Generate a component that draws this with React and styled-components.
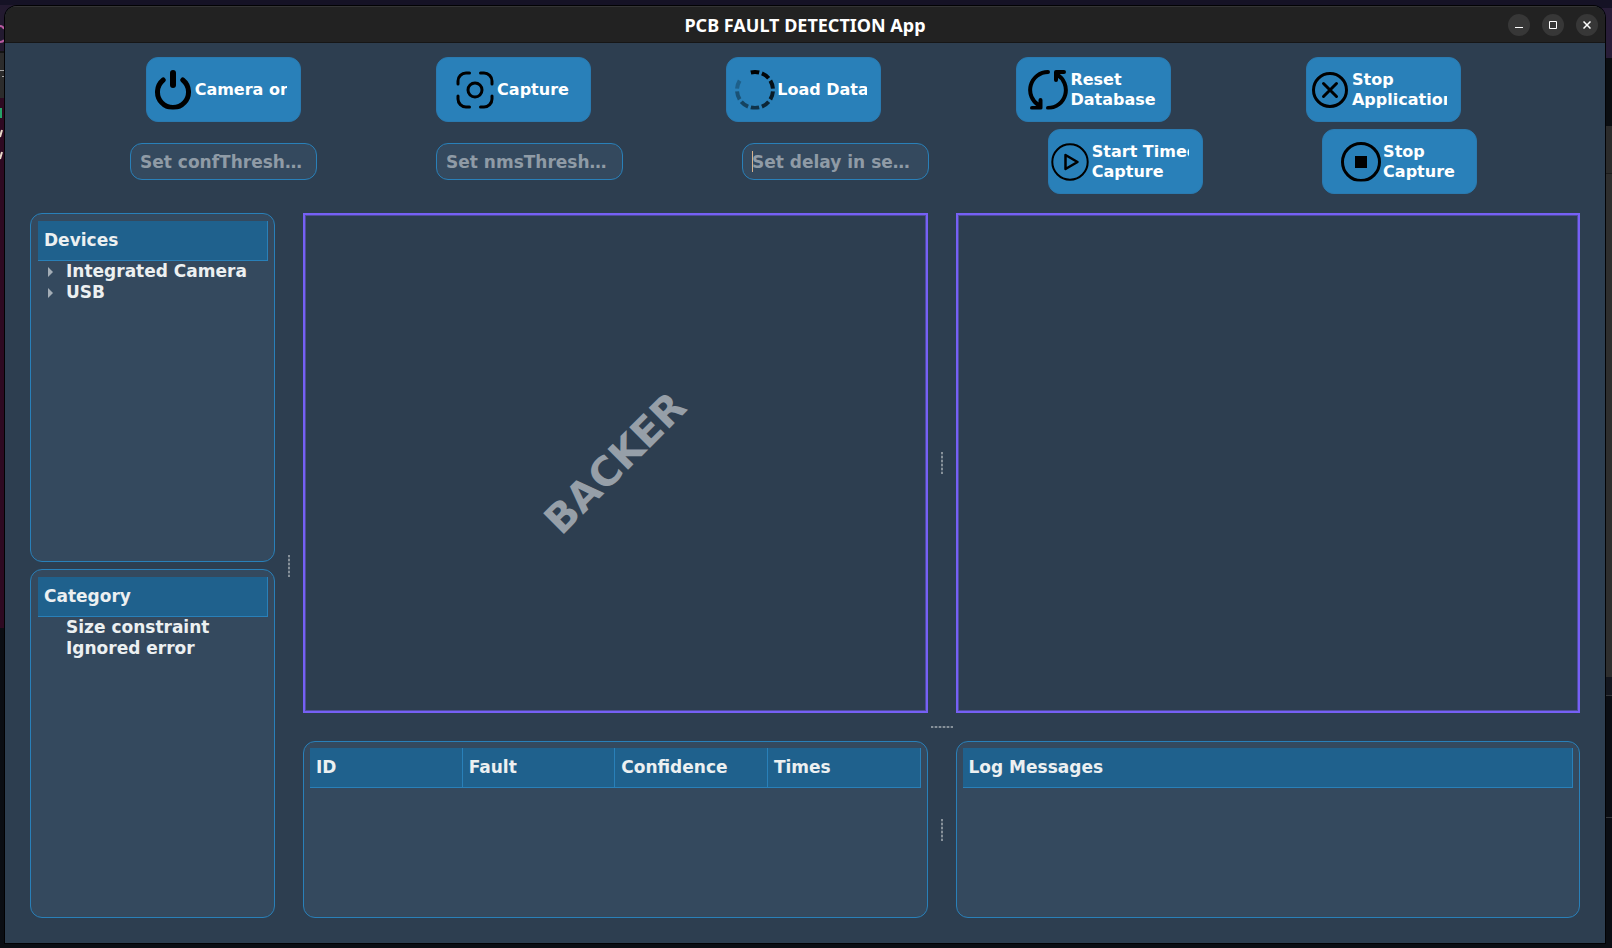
import React from 'react';
import styled, { createGlobalStyle } from 'styled-components';

const color = {
  base: '#2d3e50',
  panel: '#34495e',
  accent: '#2980b9',
  header: '#1f618d',
  text: '#ecf0f1',
  muted: '#8f9ba6',
  video: '#7660f5',
};

const GlobalStyle = createGlobalStyle`
  * { box-sizing: border-box; }
  body {
    margin: 0;
    background: #0b0e14;
    color: ${color.text};
    font-family: "DejaVu Sans", sans-serif;
    font-weight: bold;
    font-size: 17px;
    line-height: 21px;
  }
`;

const Desktop = styled.div`
  position: relative;
  display: flex;
  min-height: 100vh;
  padding: 6px 7px 5px 5px;
  background:
    linear-gradient(#151225 5px, transparent 5px),
    linear-gradient(#231a30 51px, #141414 51px 53px, #2c2c2c 53px 98px, #2e0a22 98px 628px, #0b0e14 628px) left / 50% 100% no-repeat,
    linear-gradient(#151225 8px, #281d38 8px 58px, #0b0e12 58px 126px, #2b2b2b 126px 173px, #1c1c1c 173px 174px, #2e2e2e 174px 677px, #14171f 677px 695px, #33363b 695px 696px, #0b0e14 696px 817px, #33363b 817px 818px, #0b0e14 818px) right / 50% 100% no-repeat;
`;

const EdgeMarks = styled.svg`
  position: absolute;
  top: 0;
  left: 0;
`;

const Window = styled.main`
  position: relative;
  flex: 1;
  display: flex;
  flex-direction: column;
  overflow: hidden;
  background: ${color.base};
  border-radius: 12px 12px 0 0;
  box-shadow: 0 0 0 1px #020204;
`;

const TitleBar = styled.header`
  display: grid;
  grid-template-columns: 1fr auto 1fr;
  align-items: center;
  height: 37px;
  padding: 0 7px;
  background: #222222;
  border-top: 1px solid #343434;
  border-bottom: 1px solid #161616;
`;

const Title = styled.h1`
  grid-column: 2;
  margin: 0;
  color: #ffffff;
  font: bold 18px/24px "Noto Sans", sans-serif;
`;

const WindowControls = styled.div`
  display: flex;
  justify-content: flex-end;
  gap: 12px;
`;

const WindowButton = styled.button`
  display: grid;
  place-items: center;
  width: 22px;
  height: 22px;
  padding: 0;
  border: 0;
  border-radius: 50%;
  background: #373737;
  color: #ffffff;
`;

const Toolbar = styled.section`
  display: flex;
  flex-direction: column;
  gap: 7px;
  padding: 14px 9px 19px 6px;
`;

const ToolRow = styled.div`
  display: flex;
  justify-content: space-evenly;
  align-items: center;
`;

const ToolButton = styled.button`
  width: 155px;
  height: 65px;
  padding: 0;
  border: 1px solid #2a7ab0;
  border-radius: 12px;
  background: ${color.accent};
  color: #ffffff;
  font: bold 16px/20px "DejaVu Sans", sans-serif;
  text-align: left;
`;

const ToolFace = styled.span`
  display: flex;
  align-items: center;
  justify-content: center;
  gap: 2px;
  padding-right: 3px;
  white-space: pre;
  clip-path: inset(0 13px 0 0);

  svg { flex: none; }
`;

const Field = styled.label`
  position: relative;
  display: block;
  width: 187px;
`;

const FieldInput = styled.input`
  display: block;
  width: 100%;
  height: 37px;
  padding: 0 9px;
  border: 1px solid ${color.accent};
  border-radius: 12px;
  outline: 0;
  background: ${color.panel};
  color: ${color.text};
  font: inherit;

  &::placeholder { color: ${color.muted}; opacity: 1; }
`;

const Caret = styled.span`
  position: absolute;
  top: 8px;
  left: 10px;
  width: 1px;
  height: 21px;
  background: #d9b38c;
`;

const Workspace = styled.div`
  flex: 1;
  display: grid;
  grid-template-columns: 245px 28px minmax(0, 1fr);
  padding: 0 25px 25px;
`;

const Sidebar = styled.aside`
  display: grid;
  grid-template-rows: 1fr 1fr;
  gap: 7px;
`;

const Boards = styled.div`
  display: grid;
  grid-template-rows: 500fr 28px 177fr;
`;

const Split = styled.div`
  display: grid;
  grid-template-columns: minmax(0, 1fr) 28px minmax(0, 1fr);
`;

const Handle = styled.div`
  place-self: center;
  width: ${(p) => (p.$across ? '22px' : '2px')};
  height: ${(p) => (p.$across ? '2px' : '22px')};
  background: repeating-linear-gradient(
    ${(p) => (p.$across ? 'to right' : 'to bottom')},
    #87919a 0 2px, #4a5968 2px 4px
  );
`;

const Panel = styled.section`
  padding: ${(p) => (p.$wide ? '6px' : '7px 6px 7px 7px')};
  border: 1px solid ${color.accent};
  border-radius: 12px;
  background: ${color.panel};
`;

const PanelTitle = styled.h2`
  height: 40px;
  margin: 0;
  padding: 0 6px;
  border: solid ${color.accent};
  border-width: 0 1px 1px 0;
  background: ${color.header};
  font-size: 17px;
  line-height: 39px;
`;

const Tree = styled.ul`
  margin: 0;
  padding: 0;
  list-style: none;
`;

const TreeItem = styled.li`
  display: flex;
  align-items: center;
  padding-left: 10px;
`;

const Twisty = styled.button`
  display: flex;
  width: 18px;
  padding: 0;
  border: 0;
  background: none;
  color: #a3adb6;
`;

const Leaf = styled.span`
  width: 18px;
`;

const VideoView = styled.section`
  display: grid;
  place-items: center;
  border: 2px solid ${color.video};
  box-shadow: inset 0 0 0 1px #4f4d9a;
`;

const Watermark = styled.p`
  margin: 0;
  color: #969fa8;
  font-size: 40px;
  line-height: 48px;
  transform: rotate(-45deg);
`;

const FaultTable = styled.table`
  width: 100%;
  table-layout: fixed;
  border-collapse: separate;
  border-spacing: 0;
`;

const FaultHead = styled.th`
  height: 40px;
  padding: 0 6px;
  border: solid ${color.accent};
  border-width: 0 1px 1px 0;
  background: ${color.header};
  text-align: left;
`;

const Glyph = ({ children, width = 3 }) => (
  <svg width="40" height="40" viewBox="0 0 40 40" fill="none" stroke="#000" strokeWidth={width}
    strokeLinecap="round" strokeLinejoin="round" aria-hidden="true">
    {children}
  </svg>
);

const PowerIcon = () => (
  <Glyph width={5}>
    <path d="M10.2 10A15.5 15.5 0 1 0 29.8 10" />
    <path d="M20 3v12" strokeWidth="6" />
  </Glyph>
);

const CaptureIcon = () => (
  <Glyph>
    <path d="M3 14V11a8 8 0 0 1 8-8h3.500M25.500 3H29a8 8 0 0 1 8 8v3M37 26V29a8 8 0 0 1-8 8h-3.500M14.500 37H11a8 8 0 0 1-8-8v-3" />
    <circle cx="20" cy="20" r="7" />
  </Glyph>
);

const LoadIcon = () => (
  <Glyph width={4}>
    {[1, 0.95, 0.88, 0.8, 0.7, 0.6, 0.48, 0.36, 0.25].map((opacity, i) => (
      <path key={i} d="M15.8 2.5Q20 1.5 24.2 2.5" opacity={opacity} strokeLinecap="butt"
        transform={`rotate(${i * 36} 20 20)`} />
    ))}
  </Glyph>
);

const ResetIcon = () => (
  <Glyph width={4}>
    <path d="M20 2A18 18 0 0 0 11 35.5M4 38h8.5v-8" />
    <path d="M20 38A18 18 0 0 0 29 4.5M36 2h-8v8" />
  </Glyph>
);

const CloseIcon = () => (
  <Glyph>
    <circle cx="20" cy="20" r="16.5" />
    <path d="M13.5 13.5l13 13M26.5 13.5l-13 13" />
  </Glyph>
);

const PlayIcon = () => (
  <Glyph>
    <circle cx="20" cy="20" r="17.7" strokeWidth="2" />
    <path d="M15.5 13v14l12-7z" strokeWidth="2.5" />
  </Glyph>
);

const StopIcon = () => (
  <Glyph>
    <circle cx="20" cy="20" r="18.5" />
    <path d="M14 14h12v12h-12z" fill="#000" stroke="none" />
  </Glyph>
);

const mainActions = [
  { label: 'Camera on', Icon: PowerIcon },
  { label: 'Capture', Icon: CaptureIcon },
  { label: 'Load Data', Icon: LoadIcon },
  { label: 'Reset\nDatabase', Icon: ResetIcon },
  { label: 'Stop\nApplication', Icon: CloseIcon },
];

const timedActions = [
  { label: 'Start Timed\nCapture', Icon: PlayIcon },
  { label: 'Stop\nCapture', Icon: StopIcon },
];

const fields = [
  { name: 'confThreshold', hint: 'Set confThresh…' },
  { name: 'nmsThreshold', hint: 'Set nmsThresh…' },
  { name: 'delay', hint: 'Set delay in se…', active: true },
];

const Action = ({ label, Icon }) => (
  <ToolButton type="button">
    <ToolFace>
      <Icon />
      <span>{label}</span>
    </ToolFace>
  </ToolButton>
);

const TreePanel = ({ title, items, expandable }) => (
  <Panel>
    <PanelTitle>{title}</PanelTitle>
    <Tree>
      {items.map((item) => (
        <TreeItem key={item}>
          {expandable ? (
            <Twisty type="button" aria-label={`Expand ${item}`} aria-expanded="false">
              <svg width="5" height="10" viewBox="0 0 5 10"><path d="M0 0l5 5-5 5z" fill="currentColor" /></svg>
            </Twisty>
          ) : <Leaf />}
          <span>{item}</span>
        </TreeItem>
      ))}
    </Tree>
  </Panel>
);

export default function App() {
  return (
    <>
      <GlobalStyle />
      <Desktop>
        <EdgeMarks width="5" height="170" fill="none" aria-hidden="true">
          <path d="M0 26q3 0 4 3M0 42q3 0 4-2" stroke="#b95aa0" strokeWidth="2" />
          <path d="M0 70.5h4M2 76.5h2" stroke="#a5a5a5" />
          <path d="M1 108v10" stroke="#26a269" strokeWidth="2" />
          <path d="M2 130l-2 7M2 152l-2 7" stroke="#e8d8c8" strokeWidth="2" />
        </EdgeMarks>
        <Window>
          <TitleBar>
            <Title>PCB FAULT DETECTION App</Title>
            <WindowControls>
              <WindowButton type="button" aria-label="Minimize">
                <svg width="8" height="8" viewBox="0 0 8 8"><path d="M0 6h8v1H0z" fill="currentColor" /></svg>
              </WindowButton>
              <WindowButton type="button" aria-label="Maximize">
                <svg width="8" height="8" viewBox="0 0 8 8"><path d="M.5.5h7v7h-7z" fill="none" stroke="currentColor" /></svg>
              </WindowButton>
              <WindowButton type="button" aria-label="Close">
                <svg width="8" height="8" viewBox="0 0 8 8"><path d="M.5.5l7 7M7.5.5l-7 7" stroke="currentColor" strokeWidth="1.5" /></svg>
              </WindowButton>
            </WindowControls>
          </TitleBar>
          <Toolbar>
            <ToolRow>
              {mainActions.map((a) => <Action key={a.label} {...a} />)}
            </ToolRow>
            <ToolRow>
              {fields.map((f) => (
                <Field key={f.name}>
                  <FieldInput name={f.name} aria-label={f.name} placeholder={f.hint} />
                  {f.active && <Caret />}
                </Field>
              ))}
              {timedActions.map((a) => <Action key={a.label} {...a} />)}
            </ToolRow>
          </Toolbar>
          <Workspace>
            <Sidebar>
              <TreePanel title="Devices" items={['Integrated Camera', 'USB']} expandable />
              <TreePanel title="Category" items={['Size constraint', 'Ignored error']} />
            </Sidebar>
            <Handle />
            <Boards>
              <Split>
                <VideoView aria-label="Camera view">
                  <Watermark>BACKER</Watermark>
                </VideoView>
                <Handle />
                <VideoView aria-label="Result view" />
              </Split>
              <Handle $across />
              <Split>
                <Panel $wide>
                  <FaultTable>
                    <thead>
                      <tr>
                        {['ID', 'Fault', 'Confidence', 'Times'].map((h) => (
                          <FaultHead key={h} scope="col">{h}</FaultHead>
                        ))}
                      </tr>
                    </thead>
                  </FaultTable>
                </Panel>
                <Handle />
                <Panel $wide>
                  <PanelTitle>Log Messages</PanelTitle>
                </Panel>
              </Split>
            </Boards>
          </Workspace>
        </Window>
      </Desktop>
    </>
  );
}
